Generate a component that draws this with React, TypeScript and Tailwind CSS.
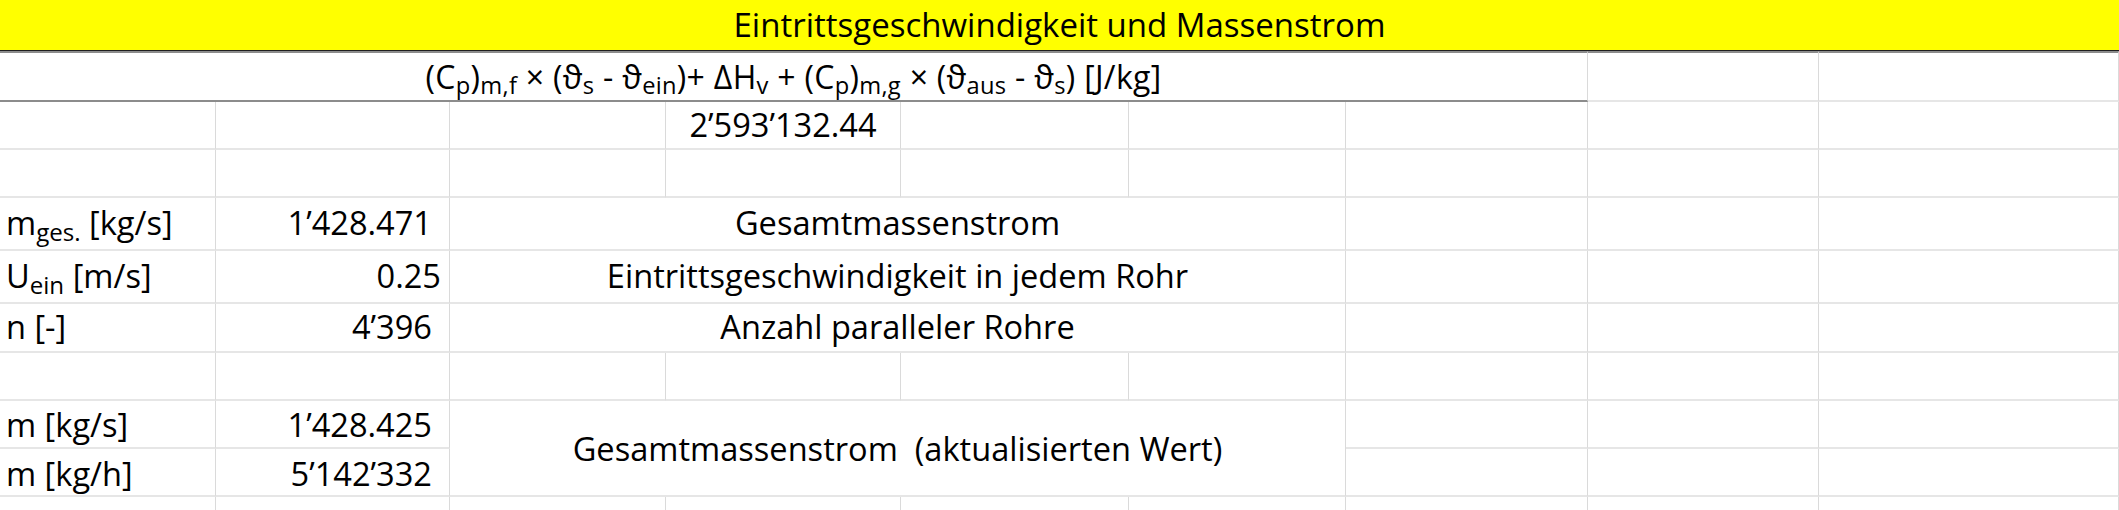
import React from "react";

const G = "border-r border-r-[#dadada] border-b-2 border-b-[#e6e6e6]";

function Cell({ className = "", children }: { className?: string; children?: React.ReactNode }) {
  return <div className={`${G} flex items-center overflow-visible whitespace-nowrap ${className}`}>{children}</div>;
}

function Sub({ children }: { children: React.ReactNode }) {
  return <sub className="text-[0.74em]">{children}</sub>;
}

function Empty({ n }: { n: number }) {
  return (
    <>
      {Array.from({ length: n }).map((_, i) => (
        <Cell key={i} />
      ))}
    </>
  );
}

export default function App() {
  return (
    <div className="w-[2119px] h-[510px] overflow-hidden bg-white text-black font-['Open_Sans','DejaVu_Sans',sans-serif] text-[32.6px]">
      <div className="grid grid-cols-[216px_234px_216px_235px_228px_217px_242px_231px_300px] grid-rows-[51px_51px_48px_48px_53px_53px_49px_48px_48px_48px_48px]">
        {/* Row 1: title */}
        <div className="col-span-9 bg-[#ffff00] border-b border-b-[#1e1e1e] flex items-center justify-center text-[33px]">
          Eintrittsgeschwindigkeit und Massenstrom
        </div>

        {/* Row 2: formula */}
        <div className="col-span-7 border-t-2 border-t-[#8c8c8c] border-b-2 border-b-[#8c8c8c] border-r border-r-[#dadada] flex items-center justify-center whitespace-nowrap text-[32px]">
          <span className="tracking-[0.3px]">
            (C<Sub>p</Sub>)<Sub>m,f</Sub> × (ϑ<Sub>s</Sub> - ϑ<Sub>ein</Sub>)+ ΔH<Sub>v</Sub> + (C<Sub>p</Sub>)<Sub>m,g</Sub> × (ϑ<Sub>aus</Sub> - ϑ<Sub>s</Sub>) [J/kg]
          </span>
        </div>
        <Cell className="border-t-2 border-t-[#8c8c8c]" />
        <Cell className="border-t-2 border-t-[#8c8c8c]" />

        {/* Row 3 */}
        <Empty n={3} />
        <Cell className="justify-center">2’593’132.44</Cell>
        <Empty n={5} />

        {/* Row 4 */}
        <Empty n={9} />

        {/* Row 5 */}
        <Cell className="pl-[6px]">
          <span>
            m<Sub>ges.</Sub> [kg/s]
          </span>
        </Cell>
        <Cell className="justify-end pr-[17px]">1’428.471</Cell>
        <Cell className="col-span-4 justify-center">Gesamtmassenstrom</Cell>
        <Empty n={3} />

        {/* Row 6 */}
        <Cell className="pl-[6px]">
          <span>
            U<Sub>ein</Sub> [m/s]
          </span>
        </Cell>
        <Cell className="justify-end pr-[8px]">0.25</Cell>
        <Cell className="col-span-4 justify-center">Eintrittsgeschwindigkeit in jedem Rohr</Cell>
        <Empty n={3} />

        {/* Row 7 */}
        <Cell className="pl-[6px]">n [-]</Cell>
        <Cell className="justify-end pr-[17px]">4’396</Cell>
        <Cell className="col-span-4 justify-center">Anzahl paralleler Rohre</Cell>
        <Empty n={3} />

        {/* Row 8 */}
        <Empty n={9} />

        {/* Row 9 */}
        <Cell className="pl-[6px] pt-[3px]">m [kg/s]</Cell>
        <Cell className="justify-end pr-[17px] pt-[3px]">1’428.425</Cell>
        <Cell className="col-span-4 row-span-2 justify-center whitespace-pre pt-[3px]">Gesamtmassenstrom  (aktualisierten Wert)</Cell>
        <Empty n={3} />

        {/* Row 10 */}
        <Cell className="pl-[6px] pt-[4px]">m [kg/h]</Cell>
        <Cell className="justify-end pr-[17px] pt-[4px]">5’142’332</Cell>
        <Empty n={3} />

        {/* Row 11 */}
        <Empty n={9} />
      </div>
    </div>
  );
}
